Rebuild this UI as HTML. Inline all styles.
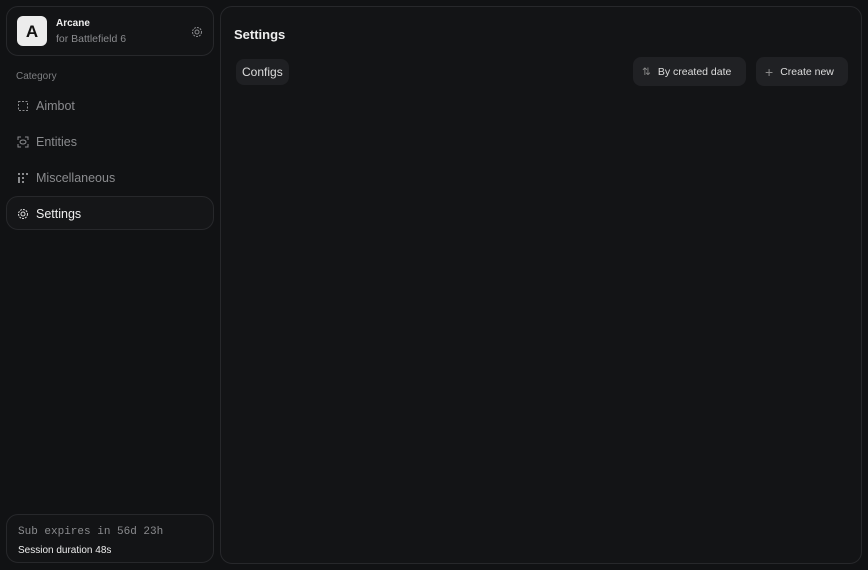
<!DOCTYPE html>
<html><head><style>
*{box-sizing:border-box;margin:0;padding:0}
body{width:868px;height:570px;background:#111214;font-family:"Liberation Sans",sans-serif;position:relative;overflow:hidden;color:#e8e8e8}
.card{position:absolute;border:1px solid #27282b;border-radius:12px;background:#131416}
.logo{position:absolute;left:10px;top:9px;width:30px;height:30px;border-radius:6px;background:#ececec;color:#111;font-weight:bold;font-size:17px;text-align:center;line-height:31px}
.nav{position:absolute;left:17px;font-size:12.5px;color:#8a8b8e;display:flex;align-items:center;gap:7px}
.nav svg{width:12px;height:12px}
.btn{position:absolute;height:29px;background:#202124;border-radius:8px;font-size:10.5px;color:#ddd;display:flex;align-items:center;padding:0 9px;gap:7px}
</style></head><body>
<div class="card" style="left:6px;top:6px;width:208px;height:50px">
 <div class="logo">A</div>
 <div style="position:absolute;left:49px;top:11px;font-size:10px;font-weight:bold;color:#eee">Arcane</div>
 <div style="position:absolute;left:49px;top:26px;font-size:10.5px;color:#8a8b8e">for Battlefield 6</div>
 <svg style="position:absolute;left:184px;top:19px" width="12" height="12" viewBox="0 0 12 12" fill="none" stroke="#8a8b8e" stroke-width="1"><circle cx="6" cy="6" r="2"/><circle cx="6" cy="6" r="4.5" stroke-dasharray="2 1"/></svg>
</div>
<div style="position:absolute;left:16px;top:71px;font-size:10px;color:#7d7e81">Category</div>
<div class="nav" style="top:99px"><svg viewBox="0 0 12 12" fill="none" stroke="#8a8b8e" stroke-dasharray="2 1.5"><rect x="1.5" y="1.5" width="9" height="9"/></svg><span>Aimbot</span></div>
<div class="nav" style="top:135px"><svg viewBox="0 0 12 12" fill="none" stroke="#8a8b8e"><path d="M1 4V1h3M8 1h3v3M11 8v3H8M4 11H1V8"/><ellipse cx="6" cy="6" rx="3" ry="2"/></svg><span>Entities</span></div>
<div class="nav" style="top:171px"><svg viewBox="0 0 12 12" fill="#8a8b8e"><rect x="1" y="1" width="2" height="2"/><rect x="5" y="1" width="2" height="2"/><rect x="9" y="1" width="2" height="2"/><rect x="1" y="5" width="2" height="6"/><rect x="5" y="5" width="2" height="2"/><rect x="5" y="9" width="2" height="2"/></svg><span>Miscellaneous</span></div>
<div class="card" style="left:6px;top:196px;width:208px;height:34px;background:#151618"></div>
<div class="nav" style="top:207px;color:#eee"><svg viewBox="0 0 12 12" fill="none" stroke="#ddd"><circle cx="6" cy="6" r="2"/><circle cx="6" cy="6" r="4.5" stroke-dasharray="2 1"/></svg><span>Settings</span></div>
<div class="card" style="left:6px;top:514px;width:208px;height:49px">
 <div style="position:absolute;left:11px;top:11px;font-family:'Liberation Mono',monospace;font-size:11px;color:#8a8b8e">Sub expires in 56d 23h</div>
 <div style="position:absolute;left:11px;top:30px;font-size:10px;color:#eee">Session duration 48s</div>
</div>
<div class="card" style="left:220px;top:6px;width:642px;height:558px">
 <div style="position:absolute;left:13px;top:20px;font-size:13px;font-weight:bold;color:#eee">Settings</div>
 <div class="btn" style="left:15px;top:52px;height:26px;padding:0 6px;font-size:12px;background:#1f2023">Configs</div>
 <div class="btn" style="left:412px;top:50px;width:113px"><span style="color:#888">⇅</span>By created date</div>
 <div class="btn" style="left:535px;top:50px;width:92px"><span style="color:#888;font-size:14px">+</span>Create new</div>
</div>
</body></html>
